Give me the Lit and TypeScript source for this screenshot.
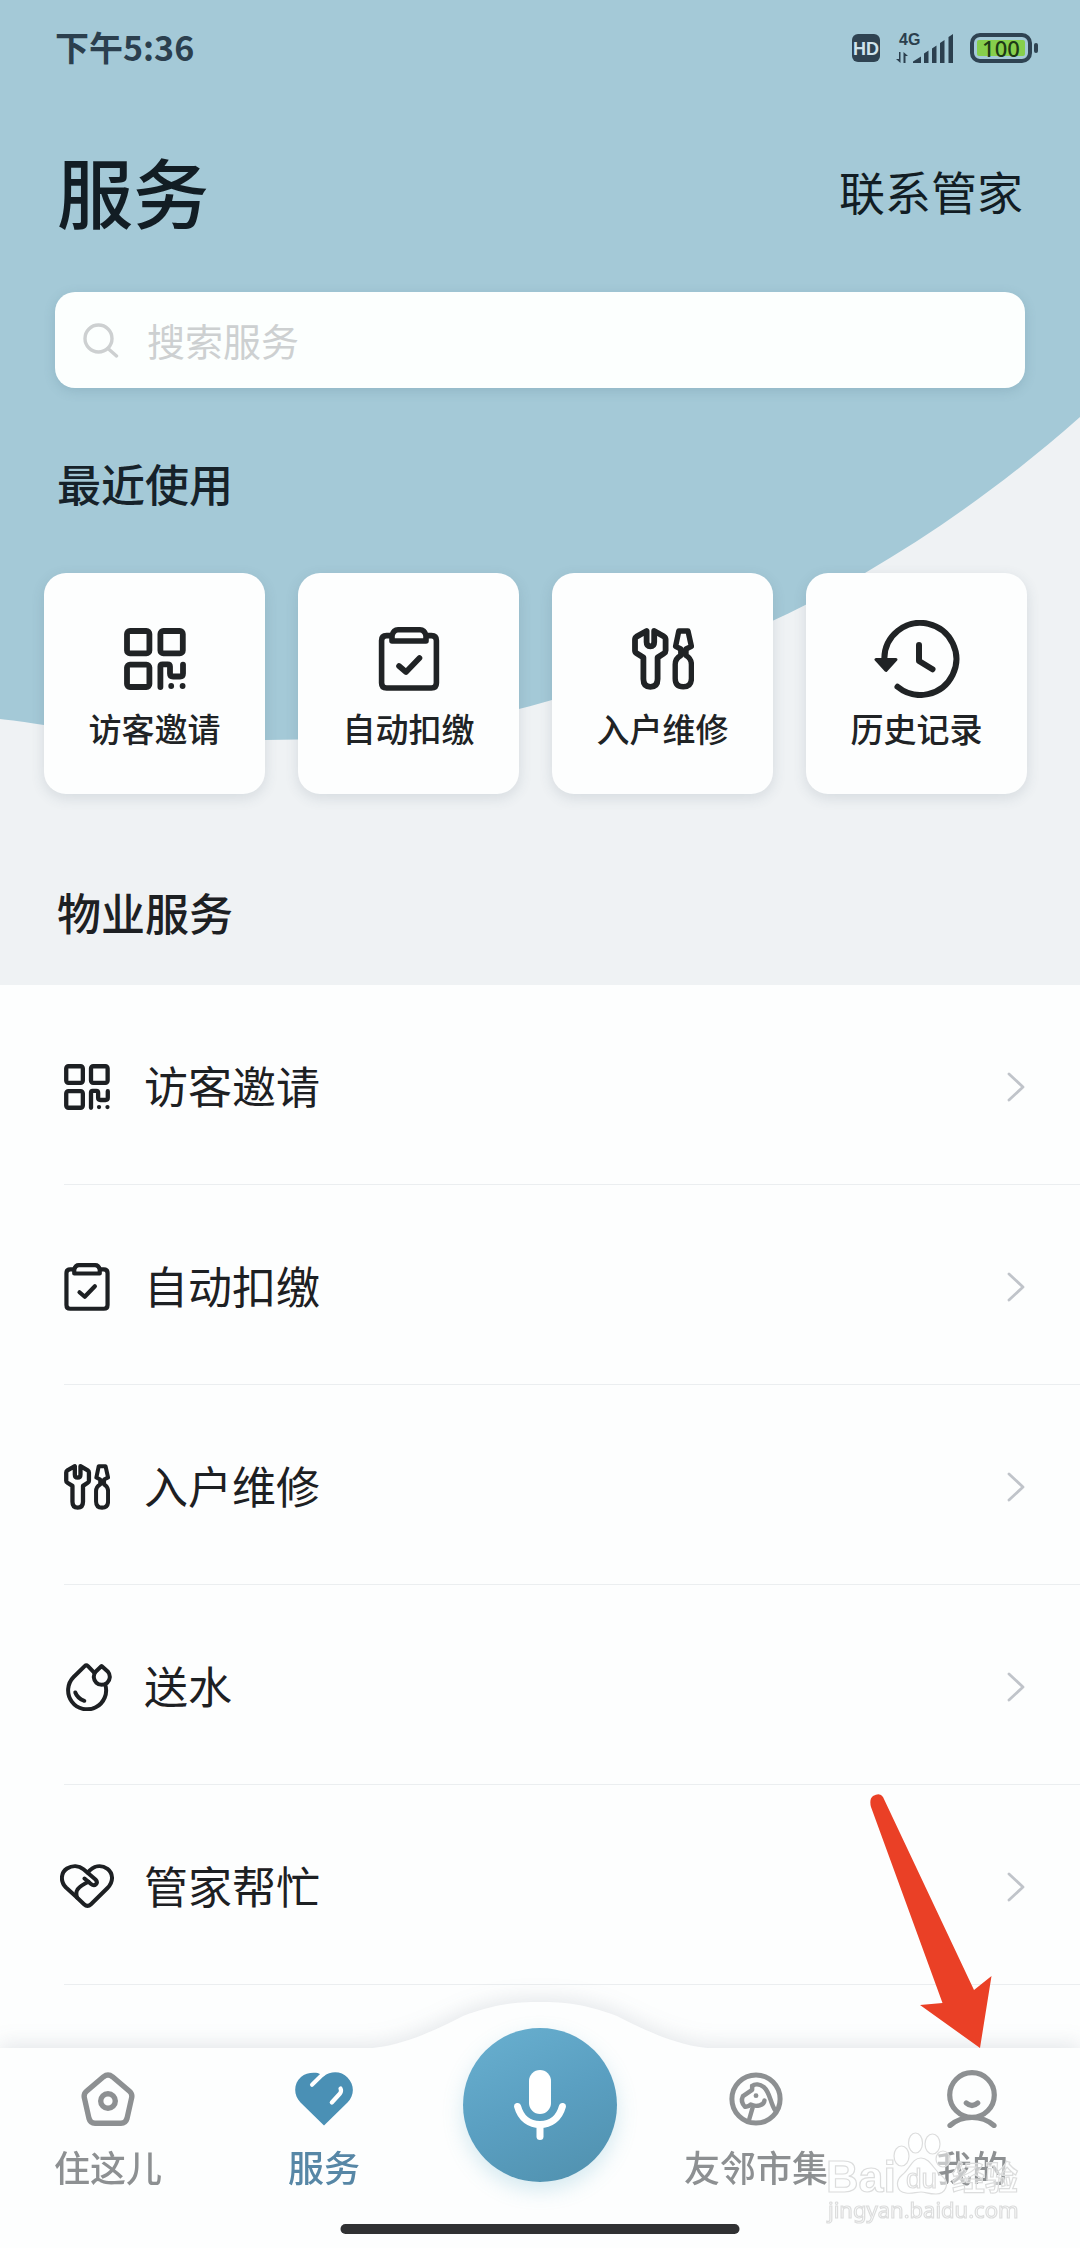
import { LitElement, html, css, nothing, type TemplateResult } from "lit";
import { customElement, property } from "lit/decorators.js";

type IconName =
  | "qr" | "clipboard" | "tools" | "history" | "water" | "help"
  | "search" | "chevron" | "home" | "heart" | "horse" | "user" | "mic";

const ICONS: Record<IconName, TemplateResult> = {
  qr: html`<svg viewBox="0 0 62 62" fill="none" stroke="currentColor" stroke-width="5.8" stroke-linecap="round" stroke-linejoin="round">
    <rect x="3" y="3" width="22.4" height="22.4" rx="3"/>
    <rect x="36.4" y="3" width="22.4" height="22.4" rx="3"/>
    <rect x="3" y="36.600" width="22.4" height="22.4" rx="3"/>
    <path d="M36.4 59V38.500Q36.4 36.300 38.600 36.300H43.600Q46 36.300 46 38.700V45.500Q46 48.500 49 48.500H56Q59 48.500 59 45.500V36.600"/>
    <circle cx="47.2" cy="58" r="2.9" fill="currentColor" stroke="none"/>
    <circle cx="58.6" cy="58" r="2.9" fill="currentColor" stroke="none"/>
  </svg>`,
  clipboard: html`<svg viewBox="0.500 0 61 64" fill="none" stroke="currentColor" stroke-width="5.6" stroke-linecap="round" stroke-linejoin="round">
    <path d="M13 8.600H8.600Q3.600 8.600 3.600 13.600V56Q3.600 61 8.600 61H53.400Q58.400 61 58.400 56V13.600Q58.400 8.600 53.400 8.600H49"/>
    <path d="M14 14V8.500Q15.500 2.800 20 2.800H42Q46.500 2.800 48 8.500V14Z"/>
    <path d="M21 39L28 45L41.500 31"/>
  </svg>`,
  tools: html`<svg viewBox="0 0 62 62" fill="none" stroke="currentColor" stroke-width="5.8" stroke-linecap="round" stroke-linejoin="round">
    <path d="M14.600 3V14Q14.600 18.300 18.400 18.300Q22.200 18.300 22.200 14V3L32 8.600Q33.600 9.600 33.600 11.500V22.500Q33.600 24.300 32 25.300L25.600 29.500V51Q25.600 58.800 18.400 58.800Q11.400 58.800 11.400 51V29.500L4.600 25.300Q3 24.300 3 22.500V11.500Q3 9.600 4.600 8.600Z"/>
    <path stroke-width="5.400" d="M46.800 3H56L59.400 18.300L54 21V27.500Q59.400 30.500 59.400 36.500V50.500Q59.400 58.800 51.300 58.800Q43.200 58.800 43.200 50.500V36.500Q43.200 30.500 48.800 27.500V21L43.600 18.300Z"/>
  </svg>`,
  history: html`<svg viewBox="0 0 86 78" fill="none" stroke="currentColor" stroke-width="6" stroke-linecap="round" stroke-linejoin="round">
    <path d="M10.300 39A36 36 0 1 1 23.500 66.800"/>
    <path d="M2 39.500H22L12 50.500Z" fill="currentColor" stroke-width="3"/>
    <path d="M45 25V41L58.500 49.300"/>
  </svg>`,
  water: html`<svg viewBox="0 0 46 48" fill="none" stroke="currentColor" stroke-width="4" stroke-linecap="round" stroke-linejoin="round">
    <path d="M28.400 9.800L22 3.200Q20.300 1.600 18.700 3.200L7.600 14A19 19 0 1 0 39.200 21.500"/>
    <path d="M35.600 3L29.600 8.800A8 8 0 1 0 42 8.800Z"/>
    <path d="M9.300 29.500Q11.500 35.500 18.300 37.800"/>
  </svg>`,
  help: html`<svg viewBox="0 0 54 45" fill="none" stroke="currentColor" stroke-width="4" stroke-linecap="round" stroke-linejoin="round">
    <path d="M17 33.500L6 23.500C0 17.500 0.800 8.500 7 4.500C12.500 1 19 1.500 23.500 5.300L35.500 15.500Q38 18 36 20.300Q33.800 22.300 31 20L24.500 14.500"/>
    <path d="M28.600 17.800Q20.500 21.500 17.500 25.500Q15.500 28.500 17 33.500L24 40.200Q27.500 43.600 31 40.200L47.500 24C54 17.500 53 9 47.500 4.800C41 0.500 33.500 1.500 27.800 8.600"/>
  </svg>`,
  search: html`<svg viewBox="0 0 36 36" fill="none" stroke="currentColor" stroke-width="3.400" stroke-linecap="round">
    <circle cx="15.500" cy="16.500" r="13.500"/><path d="M25 26.500L33.500 34"/>
  </svg>`,
  chevron: html`<svg viewBox="0 0 18 30" fill="none" stroke="currentColor" stroke-width="2.800" stroke-linecap="round" stroke-linejoin="round">
    <path d="M2 2L16 15L2 28"/>
  </svg>`,
  home: html`<svg viewBox="0 0 54 54" fill="none" stroke="currentColor" stroke-width="5.400" stroke-linejoin="round">
    <path d="M31.500 4.800L48.500 19.300Q51.600 22 50.600 26L46 46.500Q44.700 51.200 40 51.200H14Q9.300 51.200 8 46.500L3.400 26Q2.400 22 5.500 19.300L22.500 4.800Q27 1.200 31.500 4.800Z"/>
    <circle cx="27" cy="29" r="7.300"/>
  </svg>`,
  heart: html`<svg viewBox="0 0 58 54" fill="none" stroke-linecap="round" stroke-linejoin="round">
    <path fill="currentColor" d="M29 53.500L5.500 30.500C-1.800 23-1.500 11.500 6 5C10 1.500 15.500 0.300 21 0.800Q24 1 28.500 4.500C36-1.500 46.500-0.800 52.500 5.500C59.800 13 59.500 23.500 52.500 30.500Z"/>
    <path stroke="#fff" stroke-width="4" d="M28 2L17 12.800"/>
    <path stroke="#fff" stroke-width="4.200" d="M45.500 16.500Q46.800 19 45 21.500L36.800 30.500"/>
  </svg>`,
  horse: html`<svg viewBox="0 0 56 56" fill="none" stroke="currentColor" stroke-width="4.600" stroke-linecap="round" stroke-linejoin="round">
    <circle cx="28" cy="28" r="25" stroke-width="5.200"/>
    <path d="M24 14.500L24 18.500L14.500 25Q11.500 31 16.500 36Q20 36.500 22.500 33.800Q27 36 32 34.500Q36.500 33.500 36.800 29.500"/>
    <path d="M24 14.500C27 12 32 12.500 36 15.500C43 21.500 42.500 32 48 40"/>
    <path d="M24.500 37L21 49"/>
    <circle cx="28" cy="24.500" r="2.500" fill="currentColor" stroke="none"/>
  </svg>`,
  user: html`<svg viewBox="0 0 50 58" fill="none" stroke="currentColor" stroke-width="5.200" stroke-linecap="round">
    <circle cx="25" cy="25" r="22.300"/>
    <path d="M19.300 33Q25 38 30.700 33"/>
    <path d="M3 55.500Q12 47.500 25 47.500Q38 47.500 47 55.500"/>
  </svg>`,
  mic: html`<svg viewBox="0 0 52 70" fill="none" stroke="currentColor" stroke-width="7" stroke-linecap="round">
    <rect x="15" y="0" width="22" height="44" rx="11" fill="currentColor" stroke="none"/>
    <path d="M3.600 36.500C7 49 16 54.500 26 54.500S45 49 48.400 36.500"/>
    <path d="M26 55V66.500"/>
  </svg>`,
};

@customElement("ui-icon")
export class UiIcon extends LitElement {
  @property() name: IconName = "qr";

  static styles = css`
    :host { display: block; flex: none; }
    svg { display: block; width: 100%; height: 100%; }
  `;

  render() {
    return ICONS[this.name] ?? nothing;
  }
}

@customElement("status-bar")
export class StatusBar extends LitElement {
  static styles = css`
    :host {
      display: flex;
      align-items: center;
      justify-content: space-between;
      height: 95px;
      padding: 0 42px 0 55px;
      color: #2b3f4e;
    }
    .time { padding-bottom: 2px; font-size: 34px; font-weight: 700; }
    .indicators { display: flex; align-items: center; gap: 16px; }
    .hd {
      width: 28px;
      height: 28px;
      border-radius: 6px;
      background: #2f4352;
      color: #cfe3ec;
      font: 700 18px/30px "Liberation Sans", sans-serif;
      text-align: center;
    }
    .signal { display: block; width: 58px; height: 32px; overflow: visible; }
    .network { font: 700 16px "Liberation Sans", sans-serif; }
    .battery { display: flex; align-items: center; gap: 2px; }
    .cell {
      box-sizing: border-box;
      width: 62px;
      height: 30px;
      padding: 3px;
      border: 4px solid #2f4352;
      border-radius: 10px;
    }
    .charge {
      height: 16px;
      border-radius: 2px;
      background: #86cf4c;
      color: #1c3a16;
      font: 500 22px/17px "Noto Sans", sans-serif;
      text-align: center;
    }
    .cap { width: 4px; height: 10px; border-radius: 2px; background: #2f4352; }
  `;

  render() {
    return html`
      <span class="time">下午5:36</span>
      <div class="indicators">
        <span class="hd">HD</span>
        <svg class="signal" viewBox="0 0 58 32" fill="currentColor">
          <text class="network" x="3" y="13">4G</text>
          <path d="M4.500 20V31L0 27H3V20ZM7.500 31V20L12 24H9.500V31Z"/>
          <path d="M17 31V29.500L25 24.500V31ZM28 31V21.500L32.500 18.500V31ZM36 31V16.500L40.500 13.500V31ZM44 31V11L48.500 8V31ZM52.500 31V5L57 2V31Z"/>
        </svg>
        <div class="battery">
          <div class="cell"><div class="charge">100</div></div>
          <div class="cap"></div>
        </div>
      </div>
    `;
  }
}

@customElement("tab-bar")
export class TabBar extends LitElement {
  static styles = css`
    :host { display: block; position: relative; height: 200px; }
    .surface {
      position: absolute;
      inset: 0;
      background: #fdfefe;
      filter: drop-shadow(0 -4px 10px rgba(60, 80, 100, 0.13));
    }
    .bump {
      position: absolute;
      left: 50%;
      bottom: 100%;
      width: 360px;
      height: 47px;
      margin-bottom: -1px;
      transform: translateX(-50%);
    }
    nav {
      position: relative;
      display: grid;
      grid-template-columns: repeat(5, 1fr);
      justify-items: center;
    }
    .tab {
      display: flex;
      flex-direction: column;
      align-items: center;
      gap: 14px;
      padding-top: 22px;
      color: #8d9092;
      font-size: 36px;
      font-weight: 500;
      line-height: 48px;
      white-space: nowrap;
      text-decoration: none;
    }
    .active { color: #5787a6; }
    .active ui-icon { color: #4a90b5; }
    .tab ui-icon { width: 58px; height: 58px; }
    .tab .small { width: 54px; height: 54px; margin: 2px; }
    .voice {
      display: grid;
      place-items: center;
      width: 154px;
      height: 154px;
      margin-top: -20px;
      padding: 0;
      border: 0;
      border-radius: 50%;
      background: linear-gradient(155deg, #69b0d0, #5a9fc1 50%, #5090ad);
      color: #fff;
      box-shadow: 0 8px 20px rgba(90, 170, 200, 0.25);
    }
    .voice ui-icon { width: 52px; height: 70px; }
    .indicator {
      position: absolute;
      left: 50%;
      bottom: 14px;
      width: 399px;
      height: 10px;
      border-radius: 5px;
      background: #303133;
      transform: translateX(-50%);
    }
  `;

  render() {
    return html`
      <div class="surface">
        <svg class="bump" viewBox="0 0 360 47" fill="#fdfefe">
          <path d="M0 47C40 46 75 28 103 14C135 2 155 0 180 0C205 0 225 2 257 14C285 28 320 46 360 47Z"/>
        </svg>
      </div>
      <nav>
        <a class="tab" href="#home"><ui-icon class="small" name="home"></ui-icon>住这儿</a>
        <a class="tab active" href="#services" aria-current="page"><ui-icon name="heart"></ui-icon>服务</a>
        <button class="voice" type="button" aria-label="语音"><ui-icon name="mic"></ui-icon></button>
        <a class="tab" href="#market"><ui-icon class="small" name="horse"></ui-icon>友邻市集</a>
        <a class="tab" href="#mine"><ui-icon name="user"></ui-icon>我的</a>
      </nav>
      <div class="indicator"></div>
    `;
  }
}

interface Service {
  icon: IconName;
  label: string;
}

const RECENT: Service[] = [
  { icon: "qr", label: "访客邀请" },
  { icon: "clipboard", label: "自动扣缴" },
  { icon: "tools", label: "入户维修" },
  { icon: "history", label: "历史记录" },
];

const PROPERTY: Service[] = [
  { icon: "qr", label: "访客邀请" },
  { icon: "clipboard", label: "自动扣缴" },
  { icon: "tools", label: "入户维修" },
  { icon: "water", label: "送水" },
  { icon: "help", label: "管家帮忙" },
];

@customElement("app-root")
export class AppRoot extends LitElement {
  static styles = css`
    :host {
      display: flex;
      flex-direction: column;
      position: relative;
      min-height: 100vh;
      overflow: hidden;
      background: #fdfefe;
      color: #1d2023;
      font-family: "Noto Sans CJK SC", sans-serif;
    }
    * { box-sizing: border-box; }
    .hero {
      position: relative;
      isolation: isolate;
      padding-bottom: 41px;
      background: #eff2f4;
    }
    .wave {
      position: absolute;
      z-index: -1;
      top: 0;
      left: 0;
      width: 100%;
      height: 740px;
    }
    .heading {
      display: flex;
      align-items: center;
      justify-content: space-between;
      height: 197px;
      padding: 0 57px 8px;
      color: #121d24;
    }
    h1 { margin: 0; font-size: 76px; font-weight: 500; line-height: 96px; }
    .contact { color: inherit; font-size: 46px; line-height: 64px; text-decoration: none; }
    .search {
      display: flex;
      align-items: center;
      gap: 28px;
      height: 96px;
      margin: 0 55px;
      padding: 0 28px;
      border-radius: 20px;
      background: #fcfffe;
      color: #cdd0d1;
      box-shadow: 0 3px 12px rgba(70, 110, 130, 0.2);
    }
    .search ui-icon { width: 36px; height: 36px; }
    .search input {
      flex: 1;
      min-width: 0;
      padding: 0;
      border: 0;
      outline: 0;
      background: none;
      color: #1d2023;
      font: inherit;
      font-size: 38px;
      line-height: 56px;
    }
    .search input::placeholder { color: #cdd0d1; opacity: 1; }
    h2 {
      margin: 0;
      padding: 63px 57px 58px;
      font-size: 44px;
      font-weight: 500;
      line-height: 64px;
      color: #16222a;
    }
    .recent {
      display: grid;
      grid-template-columns: repeat(4, 1fr);
      gap: 33px;
      padding: 0 53px 0 44px;
    }
    .card {
      display: flex;
      flex-direction: column;
      align-items: center;
      gap: 8px;
      height: 221px;
      padding: 46px 0 0;
      border: 0;
      border-radius: 22px;
      background: #fdfefe;
      color: #202325;
      font: inherit;
      font-size: 33px;
      font-weight: 500;
      line-height: 42px;
      box-shadow: 0 4px 14px rgba(60, 80, 100, 0.14);
    }
    .glyph { display: grid; place-items: center; height: 80px; }
    .glyph ui-icon { width: 62px; height: 64px; }
    .glyph .wide { width: 86px; height: 78px; }
    .list-title { padding: 86px 57px 0; color: #1d2023; }
    ul { margin: 0; padding: 0; list-style: none; }
    li { margin-left: 64px; border-bottom: 1px solid #ebeef0; }
    .row {
      display: grid;
      grid-template-columns: 48px 1fr auto;
      align-items: center;
      gap: 32px;
      height: 199px;
      padding: 4px 55px 0 0;
      color: inherit;
      font-size: 44px;
      line-height: 64px;
      text-decoration: none;
    }
    .row span { padding-bottom: 4px; }
    .row .lead { width: 46px; height: 48px; }
    .row .water { justify-self: end; }
    .row .help { width: 54px; height: 45px; margin-left: -4px; }
    .row .chevron { width: 18px; height: 30px; color: #c0c4ca; }
    tab-bar { margin-top: auto; }
    .pointer {
      position: absolute;
      right: 88px;
      bottom: 200px;
      width: 122px;
      height: 255px;
      pointer-events: none;
    }
    .watermark {
      position: absolute;
      right: 56px;
      bottom: 20px;
      width: 200px;
      height: 100px;
      overflow: visible;
      pointer-events: none;
    }
    .brand { font: 700 45px "Liberation Sans", sans-serif; }
    .paw { font: 400 28px "Liberation Sans", sans-serif; }
    .brand-cn { font: 700 33px "Noto Sans CJK SC", sans-serif; }
    .site { font: 400 22px "Noto Sans", sans-serif; }
  `;

  render() {
    return html`
      <header class="hero">
        <svg class="wave" viewBox="0 0 1080 740" preserveAspectRatio="none" aria-hidden="true">
          <path fill="#a4c9d7" d="M0 0H1080V417C1010 479 940 529 865 573C768 628 660 674 552 700C455 728 370 740 265 740C190 740 90 733 44 725C25 722 10 720 0 719Z"/>
        </svg>
        <status-bar></status-bar>
        <div class="heading">
          <h1>服务</h1>
          <a class="contact" href="#contact">联系管家</a>
        </div>
        <label class="search">
          <ui-icon name="search"></ui-icon>
          <input type="text" placeholder="搜索服务" aria-label="搜索服务" />
        </label>
        <h2>最近使用</h2>
        <div class="recent">
          ${RECENT.map(
            (s) => html`
              <button class="card" type="button">
                <span class="glyph"><ui-icon class=${s.icon === "history" ? "wide" : ""} name=${s.icon}></ui-icon></span>
                ${s.label}
              </button>
            `
          )}
        </div>
        <h2 class="list-title">物业服务</h2>
      </header>
      <main>
        <ul>
          ${PROPERTY.map(
            (s) => html`
              <li>
                <a class="row" href="#${s.icon}">
                  <ui-icon class="lead ${s.icon}" name=${s.icon}></ui-icon>
                  <span>${s.label}</span>
                  <ui-icon class="chevron" name="chevron"></ui-icon>
                </a>
              </li>
            `
          )}
        </ul>
      </main>
      <tab-bar></tab-bar>
      <svg class="pointer" viewBox="0 0 122 255" fill="#ea4026" aria-hidden="true">
        <path d="M1 14Q-1 6 3 3Q10-1 13 4L104 197L121.500 183L110 255L50 212L72.500 210Z"/>
      </svg>
      <svg class="watermark" viewBox="0 0 200 100" fill="#fff" fill-opacity="0.5" stroke="#dcdddd" stroke-width="1.200">
        <text class="brand" x="2" y="64">Bai</text>
        <ellipse cx="77.500" cy="28" rx="7.500" ry="10"/>
        <ellipse cx="91.500" cy="15" rx="7" ry="10"/>
        <ellipse cx="108.500" cy="16" rx="7.500" ry="10"/>
        <ellipse cx="119" cy="31" rx="7" ry="8"/>
        <path d="M97 30C106 30 109 41 118 48C127 56 121 66 112 66C104 66 102 64 97 64C92 64 88 66 82 65C72 64 71 53 78 47C86 41 88 30 97 30Z"/>
        <text class="paw" x="82" y="60">du</text>
        <text class="brand-cn" x="128" y="62">经验</text>
        <text class="site" x="4" y="90">jingyan.baidu.com</text>
      </svg>
    `;
  }
}
